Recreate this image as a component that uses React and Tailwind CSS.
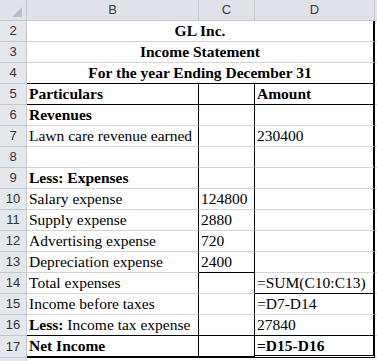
const grid = 'border-[#d4d4d4]'

const rows = [
  { n: 2, merged: 'GL Inc.', line: 'gray' },
  { n: 3, merged: 'Income Statement', line: 'gray' },
  { n: 4, merged: 'For the year Ending December 31', line: 'black' },
  { n: 5, b: 'Particulars', d: 'Amount', bold: true, bLine: true, cLine: true, dLine: true },
  { n: 6, b: 'Revenues', bold: true },
  { n: 7, b: 'Lawn care revenue earned', d: '230400' },
  { n: 8 },
  { n: 9, b: 'Less: Expenses', bold: true },
  { n: 10, b: 'Salary expense', c: '124800' },
  { n: 11, b: 'Supply expense', c: '2880' },
  { n: 12, b: 'Advertising expense', c: '720' },
  { n: 13, b: 'Depreciation expense', c: '2400', cLine: true },
  { n: 14, b: 'Total expenses', d: '=SUM(C10:C13)', dLine: true },
  { n: 15, b: 'Income before taxes', d: '=D7-D14' },
  { n: 16, b: 'Income tax expense', less: true, d: '27840', bLine: true, cLine: true, dLine: true },
  { n: 17, b: 'Net Income', d: '=D15-D16', bold: true, last: true },
]

function RowHead({ n, tall }) {
  return (
    <div
      className={`flex w-[27px] shrink-0 items-center justify-center border-r border-b border-[#c3c8cf] bg-[#e4e7eb] font-['Liberation_Sans',sans-serif] text-[13px] text-[#333] ${tall ? 'h-[22px]' : 'h-[21px]'}`}
    >
      {n}
    </div>
  )
}

function Sheet() {
  return (
    <div className="h-[361px] w-[377px] overflow-hidden bg-white">
      <div className="flex h-[21px] bg-[#dfe3e8] font-['Liberation_Sans',sans-serif] text-[13px] text-[#3a3a3a]">
        <div className="w-[27px] shrink-0 border-r border-b border-[#c3c8cf]">
          <svg width="26" height="20" viewBox="0 0 26 20">
            <polygon points="22,7 22,17 12,17" fill="#b9bec5" />
          </svg>
        </div>
        <div className="flex w-[172px] shrink-0 items-center justify-center border-r border-b border-[#c3c8cf]">B</div>
        <div className="flex w-[56px] shrink-0 items-center justify-center border-r border-b border-[#c3c8cf]">C</div>
        <div className="flex w-[120px] shrink-0 items-center justify-center border-r border-b border-[#c3c8cf]">D</div>
        <div className="w-[2px] shrink-0 border-b border-[#c3c8cf]" />
      </div>

      <div className="font-['Liberation_Serif',serif] text-[15.5px] leading-[20px] text-black">
        {rows.map((row) => {
          if (row.merged) {
            return (
              <div key={row.n} className="flex h-[21px]">
                <RowHead n={row.n} />
                <div
                  className={`flex w-[348px] shrink-0 items-center justify-center border-r-2 border-r-black border-b font-bold ${row.line === 'black' ? 'border-b-black' : 'border-b-[#d4d4d4]'}`}
                >
                  {row.merged}
                </div>
                <div className={`w-[2px] shrink-0 border-b ${grid}`} />
              </div>
            )
          }

          const h = row.last ? 'h-[22px]' : 'h-[21px]'
          const bottom = (on) =>
            row.last ? 'border-b-2 border-b-black' : on ? 'border-b border-b-black' : 'border-b border-b-[#d4d4d4]'

          return (
            <div key={row.n} className={`flex ${h}`}>
              <RowHead n={row.n} tall={row.last} />
              <div
                className={`w-[172px] shrink-0 overflow-hidden whitespace-nowrap border-r border-r-black pl-[2px] ${bottom(row.bLine)} ${row.bold ? 'font-bold' : ''}`}
              >
                {row.less ? (
                  <>
                    <span className="font-bold">Less:</span> {row.b}
                  </>
                ) : (
                  row.b
                )}
              </div>
              <div className={`w-[56px] shrink-0 border-r border-r-black pl-[2px] ${bottom(row.cLine)}`}>
                {row.c}
              </div>
              <div
                className={`w-[120px] shrink-0 border-r-2 border-r-black pl-[2px] ${row.last ? 'border-b-[3px] border-double border-b-black [border-right-style:solid]' : bottom(row.dLine)} ${row.bold ? 'font-bold' : ''}`}
              >
                {row.d}
              </div>
              <div className={`w-[2px] shrink-0 border-b ${grid}`} />
            </div>
          )
        })}
        <div className="flex h-[21px]">
          <div className="w-[27px] shrink-0 border-r border-[#c3c8cf] bg-[#e4e7eb]" />
        </div>
      </div>
    </div>
  )
}

export default function App() {
  return <Sheet />
}
